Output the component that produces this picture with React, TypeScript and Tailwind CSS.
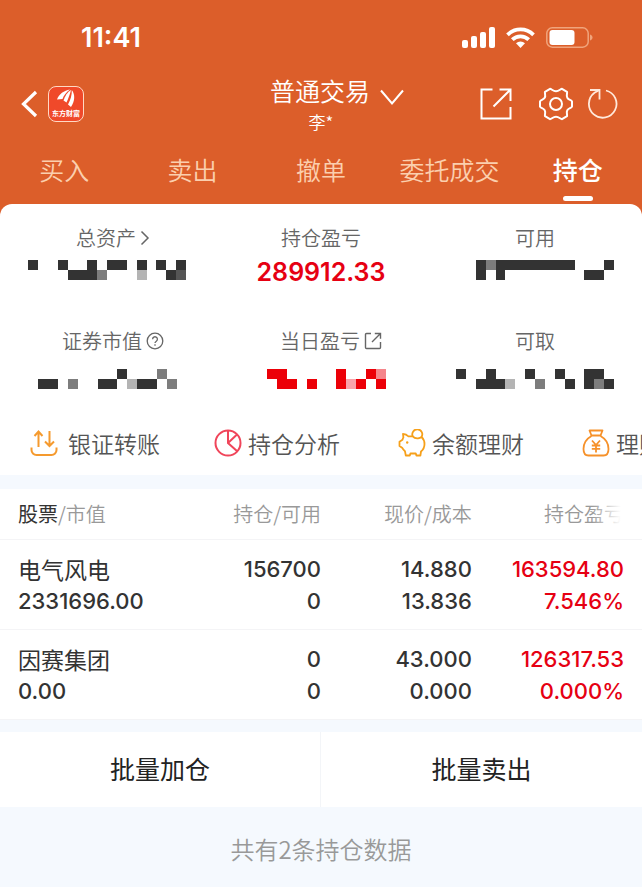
import type { ReactNode } from "react";
import clsx from "clsx";

type Stat = {
  label: string;
  icon?: ReactNode;
  labelClass?: string;
  value?: string;
  masked?: string[];
  tone?: "dark" | "red";
};

type Holding = {
  name: string;
  marketValue: string;
  position: string;
  available: string;
  price: string;
  cost: string;
  profit: string;
  rate: string;
};

const tabs = ["买入", "卖出", "撤单", "委托成交", "持仓"];

const holdings: Holding[] = [
  {
    name: "电气风电",
    marketValue: "2331696.00",
    position: "156700",
    available: "0",
    price: "14.880",
    cost: "13.836",
    profit: "163594.80",
    rate: "7.546%",
  },
  {
    name: "因赛集团",
    marketValue: "0.00",
    position: "0",
    available: "0",
    price: "43.000",
    cost: "0.000",
    profit: "126317.53",
    rate: "0.000%",
  },
];

// # solid, d dim, g grey, l light
const palettes = {
  dark: { "#": "#333333", d: "#555555", g: "#7d7d7d", l: "#b4b4b4" },
  red: { "#": "#ec0008", d: "#ec0008", g: "#f5858b", l: "#f9a3ab" },
};

function Mosaic({ rows, tone = "dark" }: { rows: string[]; tone?: "dark" | "red" }) {
  const colors: Record<string, string> = palettes[tone];
  const cols = rows[0].length;
  return (
    <svg
      width={Math.round(cols * 9.9)}
      height={20}
      viewBox={`0 0 ${cols * 10} 20`}
      preserveAspectRatio="none"
      shapeRendering="crispEdges"
      aria-hidden="true"
    >
      {rows.flatMap((row, y) =>
        row.split("").map((cell, x) =>
          colors[cell] ? (
            <rect key={`${x}-${y}`} x={x * 10} y={y * 10} width={10} height={10} fill={colors[cell]} />
          ) : null
        )
      )}
    </svg>
  );
}

const ChevronIcon = () => (
  <svg width="10" height="16" viewBox="0 0 10 16" fill="none" stroke="#666" strokeWidth="1.5">
    <path d="M1.5 1.5 8 8l-6.500 6.500" />
  </svg>
);

const HelpIcon = () => (
  <svg width="18" height="18" viewBox="0 0 18 18" fill="none" stroke="#666" strokeWidth="1.3">
    <circle cx="9" cy="9" r="7.800" />
    <path d="M6.600 7.200a2.400 2.400 0 1 1 3.700 2c-.9.6-1.300 1-1.300 1.900" />
    <path d="M9 12.300v1.500" />
  </svg>
);

const ShareIcon = () => (
  <svg width="18" height="18" viewBox="0 0 18 18" fill="none" stroke="#666" strokeWidth="1.4">
    <path d="M7 1.500H2.500a1 1 0 0 0-1 1v13a1 1 0 0 0 1 1h13a1 1 0 0 0 1-1V10" />
    <path d="M8 10 16.500 1.500M10.800 1.500h5.700v5.200" />
  </svg>
);

const statRows: Stat[][] = [
  [
    {
      label: "总资产",
      icon: <ChevronIcon />,
      labelClass: "pl-3",
      masked: ["#..#..#.##.#.#.#", "....###g...l..#d"],
    },
    { label: "持仓盈亏", value: "289912.33" },
    { label: "可用", masked: ["..#g########...#", "..#.#........##."] },
  ],
  [
    {
      label: "证券市值",
      icon: <HelpIcon />,
      labelClass: "pl-3",
      masked: ["........#...g.", "##.g..##.l##.g"],
    },
    {
      label: "当日盈亏",
      icon: <ShareIcon />,
      labelClass: "pl-5",
      masked: [".##.....#..#g", "..##.#..#l#.#"],
      tone: "red",
    },
    { label: "可取", masked: ["#..#...#..#..##.", "..###l..g..#.#g#"] },
  ],
];

const actions = [
  {
    label: "银证转账",
    icon: (
      <svg width="32" height="28" viewBox="0 0 32 28" fill="none" stroke="#f59a2e" strokeWidth="2">
        <path d="M8.500 18V3M4.500 7l4-4.500 4 4.500" />
        <path d="M19.500 2v15M15 12.500l4.500 4.500 4.500-4.500" />
        <path d="M1.500 18.500v2.500a5 5 0 0 0 5 5h15a5 5 0 0 0 5-5v-2.500" />
      </svg>
    ),
  },
  {
    label: "持仓分析",
    icon: (
      <svg width="28" height="28" viewBox="0 0 28 28" fill="none" stroke="#f0455a" strokeWidth="2">
        <circle cx="14" cy="14" r="12.500" />
        <path d="M14 1.500V14l9.500 8.500M14 14l9-8.500" />
      </svg>
    ),
  },
  {
    label: "余额理财",
    icon: (
      <svg width="28" height="28" viewBox="0 0 28 28" fill="none" stroke="#f6a01a" strokeWidth="1.800" strokeLinejoin="round">
        <path d="M5 5c2.200 0 4 .8 5.200 2.300h4.500c1.500 1.700 3.500 2.200 5.300 2 1.400-.2 2.500-.6 3.500-1.300 1.900 1.700 3 4.200 3 7 0 3-1.300 5.800-3.500 7.500l-.6 4h-4l-.6-2h-5.400l-.6 2h-4l-.8-4.200c-1.300-1-2.200-2.200-2.900-3.600L1.500 17v-4.200l3-2c.2-.9.500-1.600.9-2.200Z" />
        <path d="M14.700 7.300a5 5 0 1 1 8.800.7" />
        <circle cx="9.200" cy="13.500" r="1.200" fill="#f6a01a" stroke="none" />
      </svg>
    ),
  },
  {
    label: "理财",
    icon: (
      <svg width="28" height="28" viewBox="0 0 28 28" fill="none" stroke="#f6912a" strokeWidth="1.800" strokeLinejoin="round">
        <path d="M9.500 6.500 7.500 1.500h13l-2 5M8.500 6.500h11" />
        <path d="M9.500 7C5 9.500 1.500 14.500 1.500 20c0 4 1.800 6.500 5 6.500h15c3.200 0 5-2.500 5-6.500 0-5.500-3.500-10.500-8-13" />
        <path d="m10 11.500 4 4.500 4-4.500M14 16v7.500M9.800 16.500h8.400M9.800 19.800h8.400" />
      </svg>
    ),
  },
];

function StatusBar() {
  return (
    <div className="flex h-[73px] items-center justify-between pt-[2px] pr-[49px] pl-[81px]">
      <span className="font-[Inter,sans-serif] text-[27px] leading-8 font-semibold">11:41</span>
      <div className="flex items-center gap-[11px]">
        <svg width="33" height="21" viewBox="0 0 33 21" fill="#fff">
          <rect x="0" y="13" width="6" height="8" rx="2" />
          <rect x="9" y="9" width="6" height="12" rx="2" />
          <rect x="18" y="5" width="6" height="16" rx="2" />
          <rect x="27" y="0" width="6" height="21" rx="2" />
        </svg>
        <svg width="29" height="21" viewBox="0 0 29 21" fill="none" stroke="#fff" strokeWidth="3.800">
          <path d="M1.500 7.800a18.500 18.500 0 0 1 26 0" />
          <path d="M6.300 12.700a11.600 11.600 0 0 1 16.400 0" />
          <path d="M14.500 21 10 16.300a6.400 6.400 0 0 1 9 0Z" fill="#fff" stroke="none" />
        </svg>
        <svg width="47" height="21" viewBox="0 0 47 21" fill="none">
          <rect x=".8" y=".8" width="41.400" height="19.400" rx="5.500" stroke="#f0a47c" strokeWidth="1.500" />
          <rect x="3.500" y="3" width="25" height="15" rx="3" fill="#fff" />
          <path d="M44 7.500c1.600.5 2.500 1.600 2.500 3s-.9 2.500-2.500 3Z" fill="#f0a47c" />
        </svg>
      </div>
    </div>
  );
}

function NavBar() {
  return (
    <div className="grid grid-cols-[1fr_auto_1fr] items-center">
      <div className="flex items-center gap-[10px] pl-[21px]">
        <button type="button" aria-label="返回">
          <svg width="17" height="28" viewBox="0 0 17 28" fill="none" stroke="#fff" strokeWidth="3.200">
            <path d="M15 2 2.500 14 15 26" />
          </svg>
        </button>
        <div className="flex h-9 w-9 flex-col items-center rounded-lg border border-[#ffd9c4] bg-[#f0492a] pt-px">
          <svg width="20" height="20" viewBox="0 0 20 20" fill="#fff">
            <path d="M1 11.500C3 6 8 2.500 14 1.500 10.500 4 7.500 7.500 6.500 11Z" />
            <path d="M7.500 12.500C9 8 11.500 4 15 2c-1 4-2.500 8-4.500 12.500Z" />
            <path d="M12 16.500C14.500 12 16 7 15.800 2c3.500 4.500 3.200 11-.8 17Z" />
          </svg>
          <span className="text-[7px] leading-[10px] font-bold whitespace-nowrap">东方财富</span>
        </div>
      </div>
      <div className="flex flex-col items-center font-[350]">
        <button type="button" className="flex items-center gap-[10px] pl-[32px] text-[25px] leading-8">
          普通交易
          <svg className="mt-4" width="24" height="17" viewBox="0 0 24 17" fill="none" stroke="#fff" strokeWidth="2">
            <path d="m1 1.500 11 13 11-13" />
          </svg>
        </button>
        <span className="mt-1 text-[17px] leading-6">李*</span>
      </div>
      <div className="flex items-center justify-end pr-6">
        <button type="button" aria-label="分享" className="mr-[27px]">
          <svg width="32" height="32" viewBox="0 0 32 32" fill="none" stroke="#fff" strokeWidth="2">
            <path d="M12.500 1.500h-11v29h29V19" />
            <path d="M13.500 18.500 30.500 1.500M19.500 1.500h11V13" />
          </svg>
        </button>
        <button type="button" aria-label="设置" className="mr-[15px]">
          <svg width="34" height="34" viewBox="0 0 34 34" fill="none" stroke="#fff" strokeWidth="2" strokeLinejoin="round">
            <path d="M11 1.800c1.500 0 3 2.500 6 2.500s4.500-2.500 6-2.500l5 3c.5 1.700-1 3.700.3 6s4.200 2 4.700 3.700v5c-.5 1.700-3.400 1.500-4.700 3.700s.2 4.300-.3 6l-5 3c-1.500 0-3-2.500-6-2.500s-4.500 2.500-6 2.500l-5-3c-.5-1.700 1-3.800-.3-6S1.500 21.200 1 19.500v-5c.5-1.700 3.400-1.500 4.700-3.700s-.2-4.300.3-6Z" />
            <circle cx="17" cy="17" r="6" />
          </svg>
        </button>
        <button type="button" aria-label="刷新">
          <svg width="30" height="32" viewBox="0 0 30 32" fill="none" stroke="#ffe9db" strokeWidth="1.800">
            <path d="M18 2.500a13.800 13.800 0 1 1-11.500 2.300l5-2.800" />
            <path d="M2 2h9.500v9.500" />
          </svg>
        </button>
      </div>
    </div>
  );
}

function Tabs() {
  return (
    <nav className="grid grid-cols-5 pt-[10px]">
      {tabs.map((tab) => {
        const active = tab === "持仓";
        return (
          <a
            key={tab}
            href="#"
            aria-current={active ? "page" : undefined}
            className={clsx(
              "flex flex-col items-center gap-[2px] text-[25px] leading-[50px] whitespace-nowrap",
              active ? "font-medium text-white" : "font-[350] text-[#fbcfae]"
            )}
          >
            {tab}
            <span className={clsx("h-[5px] w-[30px] rounded-full", active && "bg-white")} />
          </a>
        );
      })}
    </nav>
  );
}

export default function App() {
  return (
    <div className="min-h-screen bg-[#f5f9fe] font-['Noto_Sans_CJK_SC',sans-serif] text-[#333]">
      <div className="bg-[#dc5e2a]">
        <header className="text-white">
          <StatusBar />
          <NavBar />
          <Tabs />
        </header>

        <section className="mt-[3px] overflow-hidden rounded-t-xl bg-white">
          <div className="flex flex-col gap-[43px] pt-5">
            {statRows.map((row, index) => (
              <div key={index} className="grid grid-cols-3">
                {row.map((stat) => (
                  <div
                    key={stat.label}
                    className={clsx("flex flex-col items-center", index === 0 ? "gap-1" : "gap-[10px]")}
                  >
                    <div
                      className={clsx(
                        "flex items-center gap-1 text-[20px] leading-7 font-[350] text-[#666]",
                        stat.labelClass
                      )}
                    >
                      {stat.label}
                      {stat.icon}
                    </div>
                    <div className="flex h-7 items-center">
                      {stat.value ? (
                        <span className="pt-1 font-[Inter,sans-serif] text-[25px] leading-7 font-semibold text-[#e60012]">
                          {stat.value}
                        </span>
                      ) : (
                        <Mosaic rows={stat.masked ?? []} tone={stat.tone} />
                      )}
                    </div>
                  </div>
                ))}
              </div>
            ))}
          </div>

          <div className="flex overflow-hidden pt-[26px] pb-2 pl-[30px]">
            {actions.map((action) => (
              <a
                key={action.label}
                href="#"
                className="flex h-12 w-46 shrink-0 items-center gap-[6px] text-[23px] leading-8 font-[350] whitespace-nowrap text-[#555]"
              >
                {action.icon}
                {action.label}
              </a>
            ))}
          </div>
        </section>
      </div>

      <table className="mt-[14px] w-full table-fixed bg-white">
        <thead>
          <tr className="h-[50px] border-b border-[#f4f4f6] text-[20px] leading-7 text-[#999]">
            <th className="w-[28%] pl-[18px] text-left font-[350]">
              <span className="font-normal text-[#333]">股票</span>/市值
            </th>
            <th className="w-[22%] text-right font-[350]">持仓/可用</th>
            <th className="w-[23.5%] text-right font-[350]">现价/成本</th>
            <th className="relative pr-[18px] text-right font-[350]">
              持仓盈亏
              <span className="absolute inset-y-0 right-[18px] w-8 bg-linear-to-r from-transparent to-white to-90%" />
            </th>
          </tr>
        </thead>
        <tbody className="font-[Inter,sans-serif] text-[22px] leading-8 font-medium">
          {holdings.map((item) => (
            <tr key={item.name} className="h-[90px] border-b border-[#f4f4f6] text-right">
              <td className="pt-[2px] pl-[18px] text-left">
                <div className="font-['Noto_Sans_CJK_SC',sans-serif] text-[23px] font-normal">{item.name}</div>
                <div>{item.marketValue}</div>
              </td>
              <td className="pt-[2px]">
                <div>{item.position}</div>
                <div>{item.available}</div>
              </td>
              <td className="pt-[2px]">
                <div>{item.price}</div>
                <div>{item.cost}</div>
              </td>
              <td className="pt-[2px] pr-[18px] text-[#e60012]">
                <div>{item.profit}</div>
                <div>{item.rate}</div>
              </td>
            </tr>
          ))}
        </tbody>
      </table>

      <div className="mt-3 grid grid-cols-2 divide-x divide-[#f3f5f8] bg-white text-[25px]">
        <button type="button" className="h-[75px] text-[#222]">
          批量加仓
        </button>
        <button type="button" className="h-[75px] text-[#222]">
          批量卖出
        </button>
      </div>

      <p className="py-6 text-center text-[24px] leading-9 font-[350] text-[#999]">共有2条持仓数据</p>
    </div>
  );
}
